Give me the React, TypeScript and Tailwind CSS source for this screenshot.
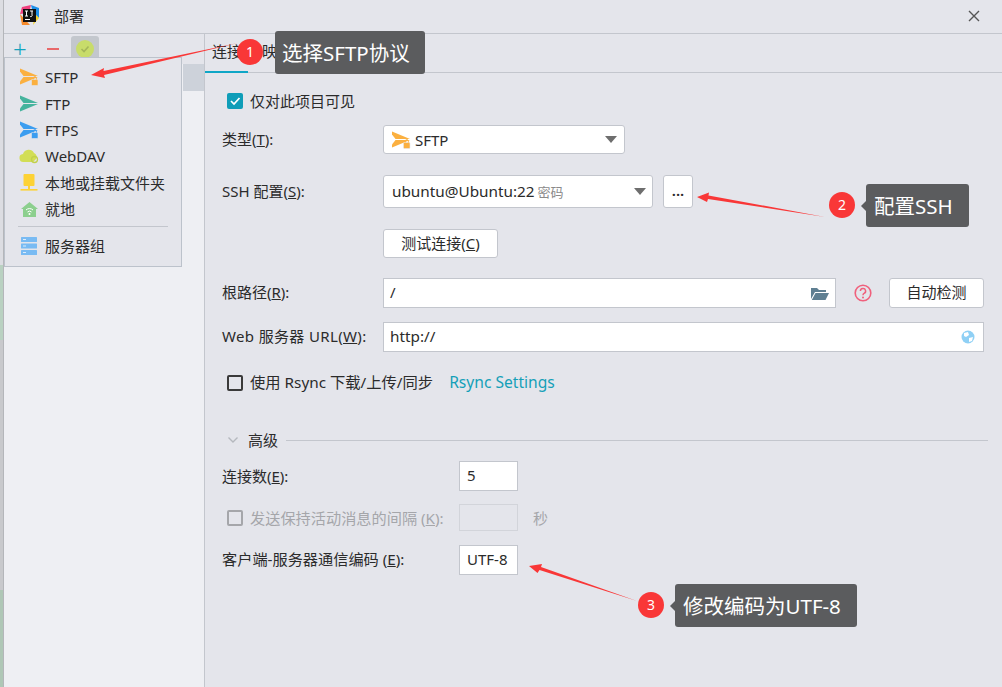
import React from 'react'

const SendIcon = ({ color, lock }: { color: string; lock?: string }) => (
  <svg width="20" height="18" viewBox="0 0 20 18">
    <path d="M1 0.5 V3.5 L4.5 8 H19 Z" fill={color} />
    <path d="M1 16.5 V13.5 L4.5 9 H19 Z" fill={color} />
    {lock && (
      <g>
        <rect x="12.5" y="11.5" width="6.5" height="6" rx="1" fill={lock} stroke="#e4e5eb" strokeWidth="0.6" />
        <path d="M14.2 11.5 V10.2 a1.6 1.6 0 0 1 3.2 0 V11.5" fill="none" stroke={lock} strokeWidth="1" />
      </g>
    )}
  </svg>
)

const Caret = () => <span className="h-0 w-0 border-x-[6px] border-t-[7px] border-x-transparent border-t-[#6e6e6e]" />

const Check = () => (
  <span className="flex h-[16px] w-[16px] items-center justify-center rounded-[2px] bg-[#0f9db8]">
    <svg width="12" height="12" viewBox="0 0 12 12">
      <path d="M2 6 L5 9 L10.5 3" fill="none" stroke="#fff" strokeWidth="1.7" />
    </svg>
  </span>
)

const Box = ({ dim }: { dim?: boolean }) => (
  <span className={`h-[16px] w-[16px] rounded-[2px] border-2 ${dim ? 'border-[#a5a6aa]' : 'border-[#3a3a3a]'}`} />
)

const Row = ({ label, children, className }: { label: React.ReactNode; children: React.ReactNode; className?: string }) => (
  <div className={`flex items-center ${className ?? ''}`}>
    <div className="w-[161px] shrink-0 whitespace-nowrap pb-[2px]">{label}</div>
    {children}
  </div>
)

const MenuItem = ({ icon, label }: { icon: React.ReactNode; label: string }) => (
  <div className="flex h-[26.4px] items-center">
    <span className="flex w-[40px] shrink-0 justify-center pl-[8px]">{icon}</span>
    <span className="whitespace-nowrap">{label}</span>
  </div>
)

const Badge = ({ n, className }: { n: number; className: string }) => (
  <div className={`absolute flex h-[26px] w-[26px] items-center justify-center rounded-full bg-[#f93737] text-[14px] text-white ${className}`}>{n}</div>
)

const Tip = ({ text, className, notch }: { text: string; className: string; notch?: boolean }) => (
  <div className={`absolute flex items-center rounded-[3px] bg-[#5b5c5e] text-[20.5px] whitespace-nowrap text-white ${className}`}>
    {notch && <span className="absolute -left-[5px] h-0 w-0 border-y-[6px] border-r-[6px] border-y-transparent border-r-[#5b5c5e]" />}
    {text}
  </div>
)

const App: React.FC = () => {
  return (
    <div className="relative flex h-[687px] w-[1002px] overflow-hidden bg-[#e4e5eb] text-[15px] leading-[20px] text-[#2b2b2b] [font-family:'Noto_Sans','Noto_Sans_CJK_SC',sans-serif]">
      {/* what is behind the window */}
      <div className="flex w-[4px] shrink-0 flex-col border-r border-[#b4b6ba]">
        <div className="h-[265px] bg-[#dcdde2]" />
        <div className="h-[75px] bg-[#b9d1c1]" />
        <div className="h-[250px] bg-[#c8c9cc]" />
        <div className="flex-1 bg-[#afc7b6]" />
      </div>

      <div className="flex-1">
        {/* title bar */}
        <div className="flex h-[34px] items-center border-b border-[#c3c6cd] pb-[2px] pl-[15px]">
          <svg width="21" height="21" viewBox="0 0 21 21" className="shrink-0">
            <path d="M3 2 L12 0 L10 8 L1 9 Z" fill="#f0417f" />
            <path d="M12 0 L20 3 L20 13 L14 8 Z" fill="#1d8fe8" />
            <path d="M1 9 L3 20 L11 20 Z" fill="#f68a2b" />
            <path d="M14 20 L20 13 L16 9 Z" fill="#f5d327" />
            <rect x="4" y="4" width="13" height="13" fill="#111" />
            <rect x="6" y="14" width="5" height="1" fill="#fff" />
            <path d="M6 6 H9 M7.5 6 V11 M6 11 H9 M11 6 H14 M13 6 V10 a1 1 0 0 1 -2 1" fill="none" stroke="#fff" strokeWidth="1" />
          </svg>
          <span className="ml-[14px]">部署</span>
          <svg width="12" height="12" viewBox="0 0 12 12" className="ml-auto mr-[22px]">
            <path d="M1 1 L11 11 M11 1 L1 11" stroke="#555" strokeWidth="1.4" />
          </svg>
        </div>

        <div className="flex h-[653px]">
          {/* left pane */}
          <div className="flex w-[201px] shrink-0 flex-col border-r border-[#c3c6cd]">
            <div className="flex h-[30px] items-center">
              <span className="ml-[9px] text-[24px] leading-none font-light text-[#13a3be]">+</span>
              <span className="ml-[20px] h-[2px] w-[12px] bg-[#e8686a]" />
              <span className="ml-[12px] flex h-[26px] w-[28px] items-center justify-center rounded-[3px] bg-[#c3c7cd]">
                <span className="flex h-[18px] w-[18px] items-center justify-center rounded-full bg-[#c8dc6a]">
                  <svg width="10" height="10" viewBox="0 0 10 10">
                    <path d="M1.5 5 L4 7.5 L8.5 2.5" fill="none" stroke="#a4b65a" strokeWidth="1.6" />
                  </svg>
                </span>
              </span>
            </div>
            <div className="flex-1 bg-[#eeeff3]">
              <div className="ml-auto h-[27px] w-[21px] bg-[#cdd2da]" />
            </div>
          </div>

          {/* right pane */}
          <div className="flex-1">
            <div className="flex h-[39px] border-b border-[#c3c6cd] pl-[7px] pt-[7px]">
              <span className="relative w-[50px]">
                连接
                <span className="absolute -left-[7px] top-[30px] h-[2px] w-[43px] bg-[#0fa6c6]" />
              </span>
              <span className="w-[48px]">映射</span>
              <span>排除的路径</span>
            </div>

            <div className="flex flex-col pl-[17px]">
              <div className="mt-[20px] flex h-[16px] items-center pl-[5px]">
                <Check />
                <span className="ml-[7px]">仅对此项目可见</span>
              </div>

              <Row label={<>类型(<u>T</u>):</>} className="mt-[16px] h-[29px]">
                <div className="flex h-[29px] w-[242px] items-center rounded-[3px] border border-[#c3c6cd] bg-white pl-[7px] pr-[7px]">
                  <SendIcon color="#fbb040" lock="#fbb040" />
                  <span className="ml-[4px]">SFTP</span>
                  <span className="ml-auto flex"><Caret /></span>
                </div>
              </Row>

              <Row label={<>SSH 配置(<u>S</u>):</>} className="mt-[21px] h-[33px]">
                <div className="flex h-[33px] w-[270px] items-center rounded-[3px] border border-[#c3c6cd] bg-white pl-[8px] pr-[6px]">
                  <span className="pb-[2px] text-[15.3px]">ubuntu@Ubuntu:22</span>
                  <span className="ml-[3px] text-[13px] text-[#8a8a8a]">密码</span>
                  <span className="ml-auto flex"><Caret /></span>
                </div>
                <div className="ml-[10px] flex h-[33px] w-[30px] items-center justify-center rounded-[3px] border border-[#c3c6cd] bg-white pb-[3px] font-semibold">...</div>
              </Row>

              <Row label="" className="mt-[21px] h-[29px]">
                <div className="flex h-[29px] w-[115px] items-center justify-center rounded-[3px] border border-[#c3c6cd] bg-white pb-[2px]">
                  <span>测试连接(<u>C</u>)</span>
                </div>
              </Row>

              <Row label={<>根路径(<u>R</u>):</>} className="mt-[20px] h-[30px]">
                <div className="flex h-[30px] w-[453px] items-center border border-[#c3c6cd] bg-white pl-[6px] pr-[6px]">
                  <span className="pb-[2px]">/</span>
                  <svg width="18" height="15" viewBox="0 0 18 15" className="ml-auto">
                    <path d="M0 2 H6 L8 4 H15 V6 H4 L0 13 Z" fill="#5f7f92" />
                    <path d="M4.5 7 H18 L14.5 14 H0.8 Z" fill="#5f7f92" />
                  </svg>
                </div>
                <svg width="18" height="18" viewBox="0 0 18 18" className="ml-[18px]">
                  <circle cx="9" cy="9" r="7.8" fill="none" stroke="#f0607c" strokeWidth="1.6" />
                  <path d="M6.4 7 a2.6 2.6 0 1 1 3.6 2.4 c-.8.4-1 .8-1 1.8" fill="none" stroke="#f0607c" strokeWidth="1.5" />
                  <circle cx="9" cy="13.4" r="1" fill="#f0607c" />
                </svg>
                <div className="ml-[17px] flex h-[30px] w-[95px] items-center justify-center rounded-[3px] border border-[#c3c6cd] bg-white pb-[2px]">自动检测</div>
              </Row>

              <Row label={<span className="tracking-[0.35px]">Web 服务器 URL(<u>W</u>):</span>} className="mt-[14px] h-[30px]">
                <div className="flex h-[30px] w-[601px] items-center border border-[#c3c6cd] bg-white pl-[6px] pr-[8px]">
                  <span className="pb-[2px] text-[15.3px]">http://</span>
                  <svg width="14" height="14" viewBox="0 0 14 14" className="ml-auto">
                    <circle cx="7" cy="7" r="6.5" fill="#8fd0f5" />
                    <path d="M3 3 L7 2 L8 5 L5 7 L3 6 Z M8 8 L12 7 L11 11 L8 12 Z" fill="#fff" />
                  </svg>
                </div>
              </Row>

              <div className="mt-[23px] flex h-[16px] items-center pl-[5px]">
                <Box />
                <span className="ml-[7px] pb-[2px] text-[15.3px]">使用 Rsync 下载/上传/同步</span>
                <span className="ml-[16px] pb-[2px] text-[15.6px] text-[#14a0b8]">Rsync Settings</span>
              </div>

              <div className="mt-[39px] flex h-[20px] items-center pl-[5px]">
                <svg width="12" height="8" viewBox="0 0 12 8">
                  <path d="M1.5 1.5 L6 6 L10.5 1.5" fill="none" stroke="#b5b8be" strokeWidth="1.4" />
                </svg>
                <span className="ml-[9px]">高级</span>
                <span className="ml-[8px] mr-[14px] h-px flex-1 bg-[#c3c6cd]" />
              </div>

              <div className="mt-[11px] flex h-[30px] items-center">
                <span className="w-[237px]">连接数(<u>E</u>):</span>
                <div className="flex h-[30px] w-[59px] items-center border border-[#c3c6cd] bg-white pb-[2px] pl-[7px]">5</div>
              </div>

              <div className="mt-[13px] flex h-[27px] items-center text-[#a5a6aa]">
                <span className="flex w-[237px] items-center pl-[5px]">
                  <Box dim />
                  <span className="ml-[7px] whitespace-nowrap text-[15.2px]">发送保持活动消息的间隔 (<u>K</u>):</span>
                </span>
                <div className="h-[27px] w-[59px] border border-[#d2d4da] bg-[#e4e5eb]" />
                <span className="ml-[15px]">秒</span>
              </div>

              <div className="mt-[14px] flex h-[30px] items-center">
                <span className="w-[237px] whitespace-nowrap pb-[2px] text-[15.2px]">客户端-服务器通信编码 (<u>E</u>):</span>
                <div className="flex h-[30px] w-[59px] items-center border border-[#c3c6cd] bg-white pb-[2px] pl-[7px]">UTF-8</div>
              </div>
            </div>
          </div>
        </div>
      </div>

      {/* popup menu */}
      <div className="absolute left-[4px] top-[57px] h-[210px] w-[178px] border border-[#bcc2cb] bg-[#e4e5eb] pt-[6px]">
        <MenuItem icon={<SendIcon color="#fbb040" lock="#fbb040" />} label="SFTP" />
        <MenuItem icon={<SendIcon color="#45b39d" />} label="FTP" />
        <MenuItem icon={<SendIcon color="#3b9df0" lock="#3b9df0" />} label="FTPS" />
        <MenuItem
          icon={
            <svg width="20" height="16" viewBox="0 0 20 16">
              <path d="M5 14 a4 4 0 0 1 -1 -8 a6 6 0 0 1 11 -1 a4 4 0 0 1 2 6 L14 14 Z" fill="#d2de55" />
              <circle cx="15.5" cy="11.5" r="3" fill="none" stroke="#c2d04a" strokeWidth="1.3" />
            </svg>
          }
          label="WebDAV"
        />
        <MenuItem
          icon={
            <svg width="18" height="18" viewBox="0 0 18 18">
              <rect x="3.5" y="0" width="11" height="12" rx="1" fill="#fdd235" />
              <rect x="8" y="12" width="2" height="3" fill="#fdd235" />
              <rect x="0.5" y="15" width="17" height="1.6" fill="#fdd235" />
            </svg>
          }
          label="本地或挂载文件夹"
        />
        <MenuItem
          icon={
            <svg width="17" height="15" viewBox="0 0 17 15">
              <path d="M8.5 0 L17 7 H15 V15 H2 V7 H0 Z" fill="#8ccf8e" />
              <path d="M5 8 a5 5 0 0 1 7 0 M6.5 10 a3 3 0 0 1 4 0" fill="none" stroke="#fff" strokeWidth="1" />
              <circle cx="8.5" cy="12" r="1" fill="#fff" />
            </svg>
          }
          label="就地"
        />
        <div className="mx-[13px] mb-[5px] mt-[4px] h-px bg-[#c3c6cd]" />
        <MenuItem
          icon={
            <svg width="16" height="18" viewBox="0 0 16 18">
              <rect y="0" width="16" height="5" rx="0.5" fill="#79bbf3" />
              <rect y="6.5" width="16" height="5" rx="0.5" fill="#79bbf3" />
              <rect y="13" width="16" height="5" rx="0.5" fill="#79bbf3" />
              <path d="M2 2.5 H5 M2 9 H5 M2 15.5 H5" stroke="#dcecfb" strokeWidth="1" />
            </svg>
          }
          label="服务器组"
        />
      </div>

      {/* annotations */}
      <svg width="1002" height="687" viewBox="0 0 1002 687" className="pointer-events-none absolute left-0 top-0">
        <path d="M91 75 L104 68 L103.5 71 L238 43 L104 75 L105 78 Z" fill="#f93737" />
        <path d="M697 197 L709 192.5 L708.5 195.5 L825 217 L708 199 L707 202 Z" fill="#f93737" />
        <path d="M529 566 L542 564 L541 567 L637 601 L539.5 570 L537.5 573 Z" fill="#f93737" />
      </svg>
      <Tip text="选择SFTP协议" className="left-[275px] top-[31px] h-[43px] w-[150px] pl-[7px]" />
      <Badge n={1} className="left-[237px] top-[39px]" />
      <Tip text="配置SSH" notch className="left-[866px] top-[184px] h-[43px] w-[103px] pl-[8px]" />
      <Badge n={2} className="left-[829px] top-[192px]" />
      <Tip text="修改编码为UTF-8" notch className="left-[675px] top-[584px] h-[43px] w-[182px] pl-[8px]" />
      <Badge n={3} className="left-[638px] top-[592px]" />
    </div>
  )
}

export default App
